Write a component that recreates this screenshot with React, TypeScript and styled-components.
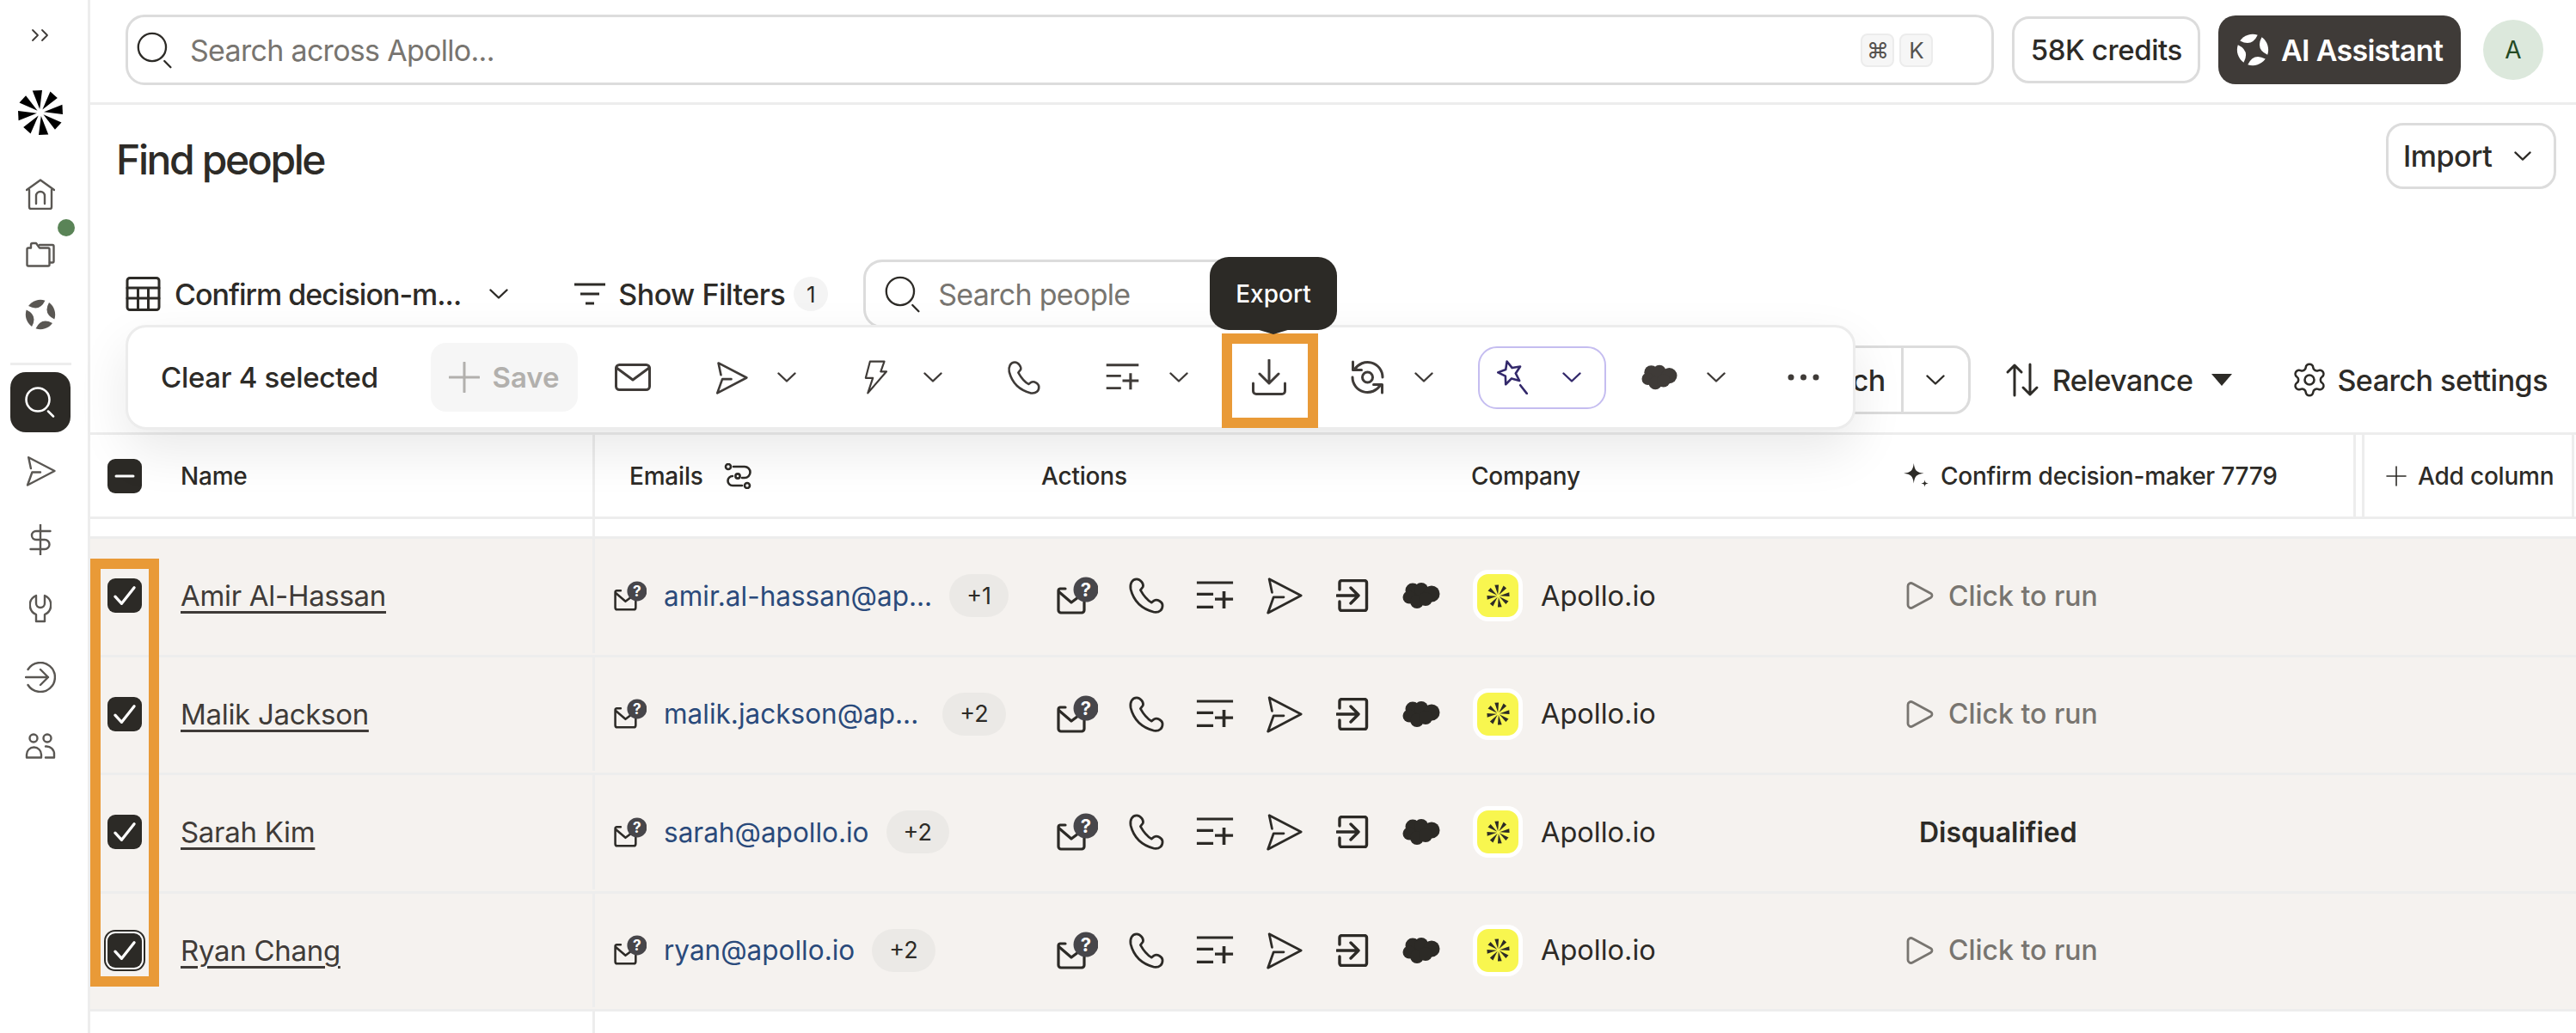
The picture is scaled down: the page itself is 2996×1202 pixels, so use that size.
import * as React from "react"
import styled, { createGlobalStyle } from "styled-components"
import { Settings } from "lucide-react"

const GlobalStyle = createGlobalStyle`
  html, body {
    margin: 0;
    padding: 0;
    background: #fff;
    overflow: hidden;
  }
  body {
    font-family: Inter, "Liberation Sans", sans-serif;
    color: #2d2b27;
  }
  * {
    box-sizing: border-box;
  }
`

const Page = styled.div`
  display: flex;
  width: 2996px;
  height: 1202px;
  overflow: hidden;
`

const Sidebar = styled.nav`
  width: 105px;
  flex: none;
  padding-right: 8px;
  border-right: 3px solid #ededed;
  display: flex;
  flex-direction: column;
  align-items: center;
  color: #5a5753;
`

const SideToggle = styled.div`
  height: 82px;
  display: flex;
  align-items: center;
  justify-content: center;
  color: #3f3b38;
`

const SideLogo = styled.div`
  margin-top: 22px;
  margin-bottom: 33px;
  height: 54px;
  color: #000;
`

const SideItem = styled.div<{ $h: number }>`
  position: relative;
  width: 100%;
  height: ${(p) => p.$h}px;
  flex: none;
  display: flex;
  align-items: center;
  justify-content: center;
`

const SideDot = styled.span`
  position: absolute;
  left: 67px;
  top: -6px;
  width: 20px;
  height: 20px;
  border-radius: 50%;
  background: #5a8457;
`

const SideRule = styled.div`
  width: 71px;
  height: 3px;
  margin-top: 21px;
  margin-bottom: 8px;
  background: #ededed;
`

const SideActive = styled.div`
  width: 70px;
  height: 70px;
  flex: none;
  margin-bottom: 5px;
  border-radius: 18px;
  background: #2c2a26;
  color: #fff;
  display: flex;
  align-items: center;
  justify-content: center;
`

const Main = styled.main`
  position: relative;
  flex: 1;
  min-width: 0;
  display: flex;
  flex-direction: column;
`

const TopBar = styled.header`
  height: 122px;
  flex: none;
  padding: 17px 38px 0 41px;
  border-bottom: 3px solid #ededed;
  display: flex;
  align-items: flex-start;
`

const GlobalSearch = styled.div`
  width: 2175px;
  height: 82px;
  padding: 0 68px 0 10px;
  border: 3px solid #dcdcdc;
  border-radius: 22px;
  display: flex;
  align-items: center;
  gap: 19px;
  color: #2d2b27;
`

const Placeholder = styled.span`
  flex: 1;
  font-size: 34px;
  letter-spacing: -0.7px;
  white-space: nowrap;
  color: #787570;
`

const KeyGroup = styled.span`
  display: flex;
  gap: 6px;
`

const Key = styled.span`
  width: 39px;
  height: 39px;
  border: 2px solid #ececec;
  border-radius: 8px;
  background: #f6f6f6;
  color: #55524e;
  font-size: 26px;
  display: flex;
  align-items: center;
  justify-content: center;
`

const Credits = styled.div`
  width: 219px;
  height: 78px;
  margin-top: 2px;
  margin-left: 21px;
  border: 3px solid #dcdcdc;
  border-radius: 20px;
  font-size: 33px;
  font-weight: 500;
  letter-spacing: -0.4px;
  display: flex;
  align-items: center;
  justify-content: center;
`

const Assistant = styled.div`
  width: 282px;
  height: 80px;
  margin-top: 1px;
  margin-left: 21px;
  border-radius: 20px;
  background: #3f3b38;
  color: #fff;
  font-size: 34px;
  font-weight: 600;
  letter-spacing: -0.7px;
  display: flex;
  align-items: center;
  justify-content: center;
  gap: 14px;
`

const Avatar = styled.div`
  width: 70px;
  height: 70px;
  margin-top: 6px;
  margin-left: 26px;
  border-radius: 50%;
  background: #dce8dc;
  color: #244a24;
  font-size: 28px;
  display: flex;
  align-items: center;
  justify-content: center;
`

const Head = styled.section`
  height: 180px;
  flex: none;
  padding: 21px 23px 0 30px;
  display: flex;
  align-items: flex-start;
  justify-content: space-between;
`

const Title = styled.h1`
  margin: 15px 0 0;
  font-size: 48px;
  line-height: 56px;
  font-weight: 500;
  letter-spacing: -2.4px;
`

const ImportButton = styled.div`
  width: 198px;
  height: 77px;
  padding-left: 17px;
  border: 3px solid #dcdcdc;
  border-radius: 20px;
  font-size: 34px;
  font-weight: 500;
  letter-spacing: -0.5px;
  display: flex;
  align-items: center;
  gap: 26px;
`

const FilterRow = styled.section`
  height: 80px;
  flex: none;
  padding-left: 41px;
  display: flex;
  align-items: center;
`

const Strong = styled.span<{ $ml?: number; $ls?: number }>`
  margin-left: ${(p) => p.$ml ?? 0}px;
  font-size: 34px;
  font-weight: 500;
  letter-spacing: ${(p) => p.$ls ?? -0.5}px;
  white-space: nowrap;
`

const Spot = styled.span<{ $ml: number }>`
  margin-left: ${(p) => p.$ml}px;
  display: flex;
`

const FilterCount = styled.span`
  width: 40px;
  height: 40px;
  margin-left: 10px;
  border-radius: 50%;
  background: #f4f4f4;
  font-size: 26px;
  display: flex;
  align-items: center;
  justify-content: center;
`

const PeopleSearch = styled.div`
  width: 500px;
  height: 80px;
  margin-left: 41px;
  align-self: flex-start;
  padding-left: 22px;
  border: 3px solid #dcdcdc;
  border-radius: 22px;
  display: flex;
  align-items: center;
  gap: 19px;
`

const SortRow = styled.section`
  height: 80px;
  flex: none;
  margin-top: 20px;
  margin-bottom: 21px;
  padding-right: 33px;
  display: flex;
  align-items: center;
  justify-content: flex-end;
`

const SplitButton = styled.div`
  height: 80px;
  border: 3px solid #dcdcdc;
  border-radius: 20px;
  display: flex;
  align-items: center;
`

const SplitLabel = styled.span`
  padding: 0 18px 0 60px;
  height: 100%;
  border-right: 3px solid #dcdcdc;
  font-size: 34px;
  font-weight: 500;
  letter-spacing: -0.5px;
  display: flex;
  align-items: center;
`

const SplitChevron = styled.span`
  width: 75px;
  display: flex;
  justify-content: center;
`

const SortControl = styled.div<{ $ml: number; $gap: number }>`
  margin-left: ${(p) => p.$ml}px;
  display: flex;
  align-items: center;
  gap: ${(p) => p.$gap}px;
`

const Table = styled.section`
  position: relative;
  flex: 1;
  min-height: 0;
  border-top: 3px solid #ededed;
`

const Columns = "587px 508px 500px 500px 540px 10px 244px 2px"

const HeaderRow = styled.div`
  height: 98px;
  display: grid;
  grid-template-columns: ${Columns};
  border-bottom: 3px solid #ededed;
  font-size: 28px;
  font-weight: 500;
  letter-spacing: -0.2px;
`

const Cell = styled.div<{ $pl?: number; $rule?: boolean }>`
  min-width: 0;
  height: 100%;
  padding-left: ${(p) => p.$pl ?? 0}px;
  border-right: ${(p) => (p.$rule ? "3px solid #ededed" : "none")};
  display: flex;
  align-items: center;
  white-space: nowrap;
`

const HeadLabel = styled.span`
  margin-left: 45px;
`

const NarrowLabel = styled.span`
  letter-spacing: -0.25px;
`

const Spacer = styled.div`
  height: 20px;
  display: grid;
  grid-template-columns: ${Columns};
`

const Rows = styled.div`
  position: relative;
`

const Row = styled.div`
  height: 137.5px;
  padding-bottom: 2px;
  display: grid;
  grid-template-columns: ${Columns};
  background: #f5f2ef;
  border-top: 3px solid #ededed;
`

const Rest = styled.div`
  height: 40px;
  display: grid;
  grid-template-columns: ${Columns};
  border-top: 3px solid #ededed;
`

const Check = styled.span<{ $focus?: boolean }>`
  width: 40px;
  height: 40px;
  flex: none;
  border-radius: 9px;
  background: #2c2a26;
  color: #fff;
  display: flex;
  align-items: center;
  justify-content: center;
  box-shadow: ${(p) => (p.$focus ? "0 0 0 2px #fff, 0 0 0 4px #2c2a26" : "none")};
`

const Name = styled.a`
  margin-left: 45px;
  font-size: 33px;
  letter-spacing: -0.3px;
  color: #3f3b38;
  text-decoration: underline;
  text-decoration-thickness: 3px;
  text-underline-offset: 6px;
`

const Email = styled.span`
  margin-left: 20px;
  font-size: 31.5px;
  color: #2a4a7b;
`

const MoreBadge = styled.span<{ $ml: number }>`
  height: 50px;
  margin-left: ${(p) => p.$ml}px;
  padding: 0 20px;
  border-radius: 25px;
  background: #ebe9e6;
  font-size: 27px;
  display: flex;
  align-items: center;
`

const ActionSlot = styled.span`
  width: 80px;
  flex: none;
  display: flex;
  justify-content: center;
  color: #2c2a26;
`

const CompanyTile = styled.span`
  width: 58px;
  height: 60px;
  flex: none;
  border: 5px solid #fff;
  border-radius: 18px;
  background: #f8f64f;
  color: #2c2a26;
  display: flex;
  align-items: center;
  justify-content: center;
`

const CompanyName = styled.span`
  margin-left: 21px;
  font-size: 32.5px;
  color: #2c2a26;
`

const Run = styled.span`
  display: flex;
  align-items: center;
  gap: 16px;
  font-size: 32px;
  font-weight: 500;
  color: #787570;
`

const Verdict = styled.span`
  font-size: 32px;
  font-weight: 600;
`

const Callout = styled.div`
  position: absolute;
  left: 0;
  top: 26px;
  width: 80px;
  height: 498px;
  border: 12px solid #e99a37;
  pointer-events: none;
`

const SelectionBar = styled.div`
  position: absolute;
  left: 41px;
  top: 378px;
  width: 2012px;
  height: 122px;
  z-index: 2;
  padding-left: 38px;
  border: 3px solid #ececec;
  border-radius: 24px;
  background: #fff;
  box-shadow: 0 24px 60px rgba(0, 0, 0, 0.09);
  display: flex;
  align-items: center;
  color: #3f3b38;
`

const Clear = styled.span`
  width: 314px;
  flex: none;
  font-size: 33px;
  font-weight: 500;
  color: #2d2b27;
  letter-spacing: -0.3px;
  white-space: nowrap;
`

const SaveButton = styled.div`
  width: 171px;
  height: 80px;
  flex: none;
  border-radius: 18px;
  background: #f6f6f6;
  color: #b2b0ad;
  font-size: 33px;
  font-weight: 600;
  display: flex;
  align-items: center;
  justify-content: center;
  gap: 14px;
`

const BarGroup = styled.div<{ $ml?: number; $gap?: number }>`
  position: relative;
  flex: none;
  margin-left: ${(p) => p.$ml ?? 74}px;
  display: flex;
  align-items: center;
  gap: ${(p) => p.$gap ?? 34}px;
`

const WandButton = styled.div`
  width: 149px;
  height: 73px;
  flex: none;
  margin-left: 52px;
  padding-left: 20px;
  border: 2px solid #c5bdf0;
  border-radius: 22px;
  color: #33296b;
  display: flex;
  align-items: center;
  gap: 40px;
`

const ExportCallout = styled.div`
  position: absolute;
  left: -35px;
  top: -30px;
  width: 112px;
  height: 110px;
  border: 12px solid #e99a37;
`

const Tooltip = styled.div`
  position: absolute;
  left: -49px;
  top: -119px;
  width: 148px;
  height: 85px;
  z-index: 1;
  border-radius: 22px;
  background: #2c2a26;
  color: #fff;
  font-size: 28px;
  font-weight: 500;
  display: flex;
  align-items: center;
  justify-content: center;
  &::after {
    content: "";
    position: absolute;
    left: 54px;
    bottom: -5px;
    border-left: 20px solid transparent;
    border-right: 20px solid transparent;
    border-top: 6px solid #2c2a26;
  }
`

const Icon = styled.svg<{ $w: number; $h: number; $sw?: number; $ml?: number; $mr?: number; $solid?: boolean; $butt?: boolean }>`
  width: ${(p) => p.$w}px;
  height: ${(p) => p.$h}px;
  margin-left: ${(p) => p.$ml ?? 0}px;
  margin-right: ${(p) => p.$mr ?? 0}px;
  flex: none;
  display: block;
  fill: ${(p) => (p.$solid ? "currentColor" : "none")};
  stroke: ${(p) => (p.$solid ? "none" : "currentColor")};
  stroke-width: ${(p) => p.$sw ?? 1.6};
  stroke-linecap: ${(p) => (p.$butt ? "butt" : "round")};
  stroke-linejoin: round;
`

type Sz = { w?: number; h?: number; sw?: number }

const SearchIcon = ({ w = 43, h = 43, sw = 1.3 }: Sz) => (
  <Icon viewBox="0 0 24 24" $w={w} $h={h} $sw={sw}>
    <circle cx="10" cy="10" r="9" />
    <path d="M18 19l4 4" />
  </Icon>
)

const Chevron = ({ w = 22, h = 12, sw = 2.4 }: Sz) => (
  <Icon viewBox="0 0 22 12" $w={w} $h={h} $sw={sw}>
    <path d="M1.5 1.5L11 10.5L20.5 1.5" />
  </Icon>
)

const Send = ({ w = 39, h = 39, sw = 1.6 }: Sz) => (
  <Icon viewBox="0 0 24 24" $w={w} $h={h} $sw={sw}>
    <path d="M4.6 10L2.8 1.5L23 12L2 23L5.6 13H12" />
  </Icon>
)

const Phone = ({ w = 42, h = 42, sw = 1.5 }: Sz) => (
  <Icon viewBox="0 0 24 24" $w={w} $h={h} $sw={sw}>
    <path d="M6 1.5C3 1.5 1.6 4.5 2.2 8C4 15 9 20.5 17 22.5C20.4 23 22.6 21 22.4 18C22.2 16 19.2 14 17 15.2L15.4 16.4C12 14.4 10 11.4 8.4 8.5L10 6.4C10.6 4.8 8.6 1.5 6 1.5Z" />
  </Icon>
)

const ListPlus = ({ w = 42, h = 40, sw = 1.8 }: Sz) => (
  <Icon viewBox="0 0 24 24" $w={w} $h={h} $sw={sw} $butt preserveAspectRatio="none">
    <path d="M1 3H23M1 11H11M1 20H11M12 14.5H23M17.5 9V21" />
  </Icon>
)

const Cloud = ({ w = 42, h = 32 }: Sz) => (
  <Icon viewBox="0 0 44 32" $w={w} $h={h} $solid>
    <circle cx="12" cy="10" r="8.5" />
    <circle cx="22" cy="9" r="8" />
    <circle cx="34" cy="14" r="9.5" />
    <circle cx="8" cy="18" r="7.5" />
    <circle cx="17" cy="23" r="8" />
    <circle cx="27" cy="20" r="8" />
  </Icon>
)

const Petals = ({ size }: { size: number }) => (
  <Icon viewBox="0 0 24 24" $w={size} $h={size} $solid>
    <g transform="rotate(-18 12 12)">
      {[0, 90, 180, 270].map((a) => (
        <path key={a} transform={`rotate(${a} 12 12)`} d="M5.2 2.8A11.4 11.4 0 0 1 18.8 2.8Q12 10 5.2 2.800Z" />
      ))}
    </g>
  </Icon>
)

const Burst = ({ size, thin }: { size: number; thin?: boolean }) => (
  <Icon viewBox="0 0 52 52" $w={size} $h={size} $solid>
    {[0, 45, 90, 135, 180, 225, 270, 315].map((a) => (
      <polygon
        key={a}
        transform={`rotate(${a - 8} 26 26)`}
        points={thin ? "25.8,23 21.5,0.500 30.500,1.200" : "25.8,22 20.6,0.500 31.400,1.500"}
      />
    ))}
  </Icon>
)

const MailAsk = ({ w = 48, h = 44 }: Sz) => (
  <Icon viewBox="0 0 48 44" $w={w} $h={h} $sw={3.2}>
    <path d="M10 14H4a2.5 2.5 0 0 0-2 2.5V39a3 3 0 0 0 3 3h24a3 3 0 0 0 3-3V26" />
    <path d="M3 18L17 30L25 24" />
    <circle cx="34" cy="15" r="14.5" fill="#47464a" stroke="none" />
    <text x="34" y="23" textAnchor="middle" fontSize="22" fontWeight="700" fontFamily="Inter, sans-serif" fill="#fff" stroke="none">?</text>
  </Icon>
)

const CheckMark = () => (
  <Icon viewBox="0 0 24 24" $w={28} $h={28} $sw={2.8}>
    <path d="M2.5 13L9 20L21.5 4" />
  </Icon>
)

const NAMES = [
  { name: "Amir Al-Hassan", email: "amir.al-hassan@ap...", more: "+1", gap: 20, result: "run" },
  { name: "Malik Jackson", email: "malik.jackson@ap...", more: "+2", gap: 28, result: "run" },
  { name: "Sarah Kim", email: "sarah@apollo.io", more: "+2", gap: 20, result: "no" },
  { name: "Ryan Chang", email: "ryan@apollo.io", more: "+2", gap: 20, result: "run" },
]

const App = () => {
  return (
    <Page>
      <GlobalStyle />
      <Sidebar>
        <SideToggle>
          <Icon viewBox="0 0 22 16" $w={22} $h={16} $sw={1.8}>
            <path d="M2 2L8 8L2 14M13 2L19 8L13 14" />
          </Icon>
        </SideToggle>
        <SideLogo>
          <Burst size={54} />
        </SideLogo>
        <SideItem $h={70}>
          <Icon viewBox="0 0 34 36" $w={34} $h={36} $sw={2.4}>
            <path d="M1 13L17 1.5L33 13M4 13V33a2 2 0 0 0 2 2H28a2 2 0 0 0 2-2V13M12 29V20a5 5 0 0 1 10 0V29" />
          </Icon>
        </SideItem>
        <SideItem $h={70}>
          <SideDot />
          <Icon viewBox="0 0 34 30" $w={34} $h={30} $sw={2.4}>
            <path d="M1.5 27a1.5 1.5 0 0 0 1.5 1.5H26a1.5 1.5 0 0 0 1.5-1.5V9a1.5 1.5 0 0 0-1.5-1.5H16L12 2H8a2 2 0 0 0-2 2v3.500H3a1.500 1.500 0 0 0-1.500 1.500Z" />
            <path d="M16 4H31a1.500 1.500 0 0 1 1.500 1.500V23a1.500 1.500 0 0 1-1.500 1.500H28" />
          </Icon>
        </SideItem>
        <SideItem $h={70}>
          <Petals size={36} />
        </SideItem>
        <SideRule />
        <SideActive>
          <SearchIcon w={36} h={36} sw={1.7} />
        </SideActive>
        <SideItem $h={80}>
          <Send w={36} h={36} sw={1.6} />
        </SideItem>
        <SideItem $h={80}>
          <Icon viewBox="0 0 26 36" $w={26} $h={36} $sw={2.4}>
            <path d="M24.500 8H8A5 5 0 0 0 8 18H18A5.500 5.500 0 0 1 18 29H1.500M13 0.500V35.500" />
          </Icon>
        </SideItem>
        <SideItem $h={80}>
          <Icon viewBox="0 0 26 34" $w={26} $h={34} $sw={2.4}>
            <path d="M8 2A12 12 0 0 0 8 24V32H18V24A12 12 0 0 0 18 2V11A5 5 0 0 1 8 11Z" />
          </Icon>
        </SideItem>
        <SideItem $h={80}>
          <Icon viewBox="0 0 36 36" $w={36} $h={36} $sw={2.4}>
            <path d="M3.500 9A17 17 0 1 1 3.500 27M1 18H27M18 9L27 18L18 27" />
          </Icon>
        </SideItem>
        <SideItem $h={80}>
          <Icon viewBox="0 0 36 30" $w={36} $h={30} $sw={2.4}>
            <circle cx="10" cy="6" r="4.500" />
            <circle cx="26" cy="6" r="4.500" />
            <path d="M2 28.500V25A8.500 8.500 0 0 1 19 25V28.500ZM24 15.500A9 9 0 0 1 34 25V28.500H24" />
          </Icon>
        </SideItem>
      </Sidebar>

      <Main>
        <TopBar>
          <GlobalSearch>
            <SearchIcon />
            <Placeholder>Search across Apollo...</Placeholder>
            <KeyGroup>
              <Key>⌘</Key>
              <Key>K</Key>
            </KeyGroup>
          </GlobalSearch>
          <Credits>58K credits</Credits>
          <Assistant>
            <Petals size={38} />
            AI Assistant
          </Assistant>
          <Avatar>A</Avatar>
        </TopBar>

        <Head>
          <Title>Find people</Title>
          <ImportButton>
            Import
            <Chevron w={20} h={11} />
          </ImportButton>
        </Head>

        <FilterRow>
          <Icon viewBox="0 0 40 40" $w={41} $h={40} $sw={3}>
            <rect x="1.500" y="1.500" width="37" height="37" rx="3" />
            <path d="M1.500 13H38.500M1.500 25H38.500M14 13V38.500M26 13V38.500" />
          </Icon>
          <Strong $ml={16} $ls={-1}>Confirm decision-m...</Strong>
          <Spot $ml={33}>
            <Chevron />
          </Spot>
          <Spot $ml={77}>
            <Icon viewBox="0 0 36 28" $w={36} $h={28} $sw={3} $butt>
              <path d="M0 3H36M7 14H29M13 25H23" />
            </Icon>
          </Spot>
          <Strong $ml={15}>Show Filters</Strong>
          <FilterCount>1</FilterCount>
          <PeopleSearch>
            <SearchIcon />
            <Placeholder>Search people</Placeholder>
          </PeopleSearch>
        </FilterRow>

        <SortRow>
          <SplitButton>
            <SplitLabel>Search</SplitLabel>
            <SplitChevron>
              <Chevron />
            </SplitChevron>
          </SplitButton>
          <SortControl $ml={40} $gap={15}>
            <Icon viewBox="0 0 40 40" $w={40} $h={40} $sw={3}>
              <path d="M11 38V3M3 11L11 3L19 11M29 2V37M21 29L29 37L37 29" />
            </Icon>
            <Strong>Relevance</Strong>
            <Icon viewBox="0 0 24 14" $w={24} $h={14} $ml={7} $solid>
              <path d="M0 0H24L12 14Z" />
            </Icon>
          </SortControl>
          <SortControl $ml={68} $gap={10}>
            <Settings size={44} strokeWidth={1.4} />
            <Strong>Search settings</Strong>
          </SortControl>
        </SortRow>

        <Table>
          <HeaderRow>
            <Cell $pl={20} $rule>
              <Check>
                <Icon viewBox="0 0 24 24" $w={24} $h={24} $sw={3}>
                  <path d="M2 12H22" />
                </Icon>
              </Check>
              <HeadLabel>Name</HeadLabel>
            </Cell>
            <Cell $pl={40}>
              Emails
              <Icon viewBox="0 0 32 30" $w={32} $h={30} $sw={2.6} $ml={24}>
                <circle cx="5" cy="4" r="3" />
                <circle cx="16" cy="15" r="2.600" />
                <circle cx="27" cy="26" r="3" />
                <path d="M11 4H24a6.500 6.500 0 0 1 0 13H21M10 15A5.500 5.500 0 0 0 10 26H21" />
              </Icon>
            </Cell>
            <Cell $pl={11}>Actions</Cell>
            <Cell $pl={11}>Company</Cell>
            <Cell $pl={13} $rule>
              <Icon viewBox="0 0 30 30" $w={32} $h={32} $mr={12} $solid>
                <path d="M12 1C13 9 15 11 23 12C15 13 13 15 12 23C11 15 9 13 1 12C9 11 11 9 12 1ZM24 19C24.400 22 25 22.600 28 23C25 23.400 24.400 24 24 27C23.600 24 23 23.400 20 23C23 22.600 23.600 22 24 19Z" />
              </Icon>
              <NarrowLabel>Confirm decision-maker 7779</NarrowLabel>
            </Cell>
            <Cell $rule />
            <Cell $pl={25} $rule>
              <Icon viewBox="0 0 24 24" $w={24} $h={24} $sw={1.600} $mr={13}>
                <path d="M12 1V23M1 12H23" />
              </Icon>
              Add column
            </Cell>
          </HeaderRow>

          <Spacer>
            <Cell $rule />
          </Spacer>

          <Rows>
            {NAMES.map((p, i) => (
              <Row key={p.name}>
                <Cell $pl={20} $rule>
                  <Check $focus={i === 3}>
                    <CheckMark />
                  </Check>
                  <Name>{p.name}</Name>
                </Cell>
                <Cell $pl={22}>
                  <MailAsk w={38} h={35} />
                  <Email>{p.email}</Email>
                  <MoreBadge $ml={p.gap}>{p.more}</MoreBadge>
                </Cell>
                <Cell $pl={13}>
                  <ActionSlot>
                    <MailAsk />
                  </ActionSlot>
                  <ActionSlot>
                    <Phone w={44} h={44} />
                  </ActionSlot>
                  <ActionSlot>
                    <ListPlus w={46} h={40} sw={1.9} />
                  </ActionSlot>
                  <ActionSlot>
                    <Send w={44} h={44} sw={1.5} />
                  </ActionSlot>
                  <ActionSlot>
                    <Icon viewBox="0 0 38 38" $w={38} $h={38} $sw={3.400}>
                      <path d="M4 12V4a2.500 2.500 0 0 1 2.500-2.500H33a2.500 2.500 0 0 1 2.500 2.500V34a2.500 2.500 0 0 1-2.500 2.500H6.500A2.500 2.500 0 0 1 4 34V26M1 19H26M17 10L26 19L17 28" />
                    </Icon>
                  </ActionSlot>
                  <ActionSlot>
                    <Cloud w={44} h={32} />
                  </ActionSlot>
                </Cell>
                <Cell $pl={13}>
                  <CompanyTile>
                    <Burst size={27} thin />
                  </CompanyTile>
                  <CompanyName>Apollo.io</CompanyName>
                </Cell>
                <Cell $pl={p.result === "run" ? 16 : 32}>
                  {p.result === "run" ? (
                    <Run>
                      <Icon viewBox="0 0 34 34" $w={34} $h={34} $sw={2.800}>
                        <path d="M3 6a3.500 3.500 0 0 1 5.300-3L29.500 14.400a3 3 0 0 1 0 5.200L8.300 31A3.500 3.500 0 0 1 3 28Z" />
                      </Icon>
                      Click to run
                    </Run>
                  ) : (
                    <Verdict>Disqualified</Verdict>
                  )}
                </Cell>
              </Row>
            ))}
            <Callout />
          </Rows>

          <Rest>
            <Cell $rule />
          </Rest>
        </Table>

        <SelectionBar>
          <Clear>Clear 4 selected</Clear>
          <SaveButton>
            <Icon viewBox="0 0 36 36" $w={36} $h={36} $sw={3}>
              <path d="M18 1V35M1 18H35" />
            </Icon>
            Save
          </SaveButton>
          <BarGroup $ml={43}>
            <Icon viewBox="0 0 42 32" $w={42} $h={32} $sw={3}>
              <rect x="1.500" y="1.500" width="39" height="29" rx="4" />
              <path d="M2 5L21 19L40 5" />
            </Icon>
          </BarGroup>
          <BarGroup>
            <Send />
            <Chevron />
          </BarGroup>
          <BarGroup $ml={78} $gap={41}>
            <Icon viewBox="0 0 16 24" $w={29} $h={40} $sw={1.300}>
              <path d="M4 1H14L11.500 8H15.500L2.500 23L6 12.500H1Z" />
            </Icon>
            <Chevron />
          </BarGroup>
          <BarGroup>
            <Phone w={41} h={41} />
          </BarGroup>
          <BarGroup>
            <ListPlus w={41} h={38} />
            <Chevron />
          </BarGroup>
          <BarGroup>
            <Tooltip>Export</Tooltip>
            <ExportCallout />
            <Icon viewBox="0 0 40 42" $w={40} $h={42} $sw={3}>
              <path d="M20 1V28M9 17L20 28L31 17M1.500 28V37a3.500 3.500 0 0 0 3.500 3.500H35a3.500 3.500 0 0 0 3.500-3.500V28" />
            </Icon>
          </BarGroup>
          <BarGroup>
            <Icon viewBox="0 0 40 40" $w={41} $h={40} $sw={3}>
              <circle cx="20" cy="20" r="6" />
              <path d="M5 11A17.500 17.500 0 0 1 37.500 20M35 29A17.500 17.500 0 0 1 2.500 20M3 2V11.500H13M37 38V28.500H27" />
            </Icon>
            <Chevron />
          </BarGroup>
          <WandButton>
            <Icon viewBox="0 0 33 37" $w={36} $h={40} $sw={2.400}>
              <path d="M10.600 1.400L16.200 8.400L24.900 6.900L20 14.300L24.100 22.200L15.600 19.800L9.300 26.100L9 17.300L1 13.300L9.300 10.200ZM25 27L32 36" />
            </Icon>
            <Chevron />
          </WandButton>
          <BarGroup $ml={41}>
            <Cloud />
            <Chevron />
          </BarGroup>
          <BarGroup $ml={72}>
            <Icon viewBox="0 0 37 8" $w={37} $h={8} $solid>
              <circle cx="4" cy="4" r="3.500" />
              <circle cx="18.500" cy="4" r="3.500" />
              <circle cx="33" cy="4" r="3.500" />
            </Icon>
          </BarGroup>
        </SelectionBar>
      </Main>
    </Page>
  )
}

export default App
